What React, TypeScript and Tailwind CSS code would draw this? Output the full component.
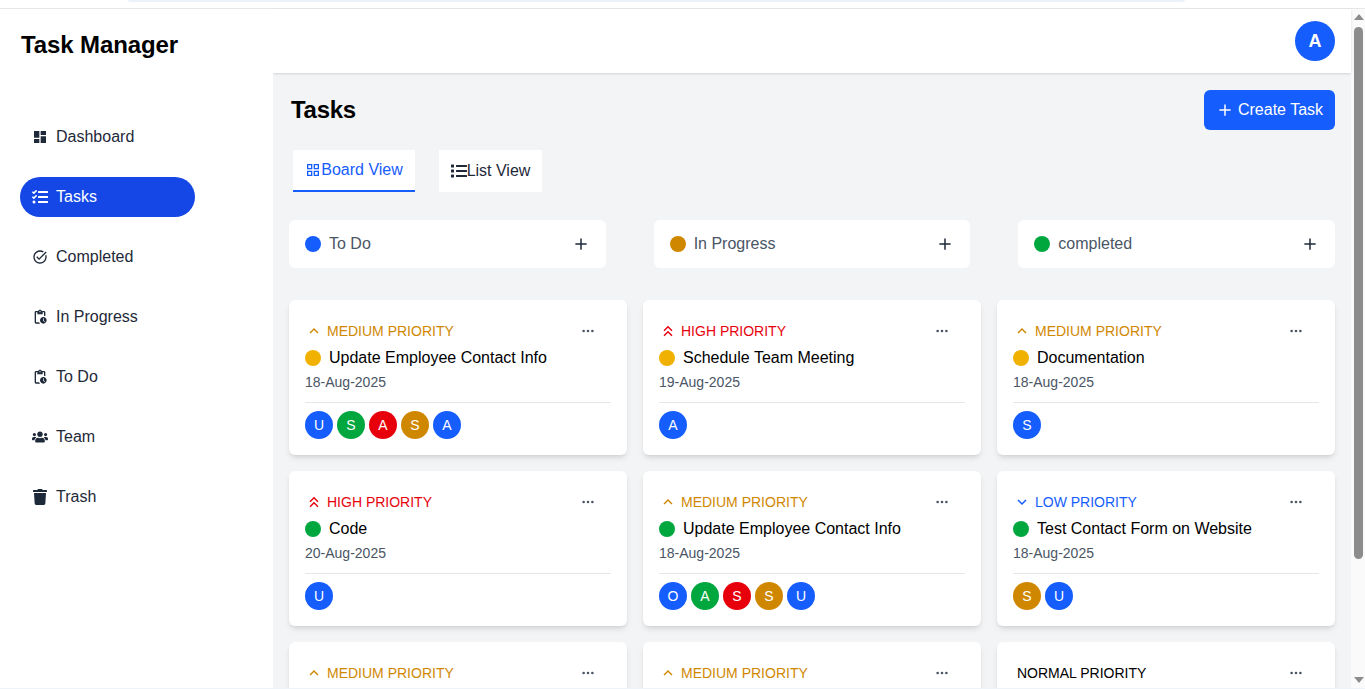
import type { ReactNode } from "react";
import { BsThreeDots } from "react-icons/bs";
import { FaList, FaTasks, FaTrash, FaUsers } from "react-icons/fa";
import { IoMdAdd } from "react-icons/io";
import {
  MdDashboard,
  MdGridView,
  MdKeyboardArrowDown,
  MdKeyboardArrowUp,
  MdKeyboardDoubleArrowUp,
  MdOutlinePendingActions,
  MdOutlineTaskAlt,
} from "react-icons/md";

type Priority = "high" | "medium" | "low" | "normal";

type Task = {
  title?: string;
  date?: string;
  priority: Priority;
  dot?: string;
  team?: { letter: string; color: string }[];
};

const BLUE = "bg-blue-600";
const GREEN = "bg-green-600";
const RED = "bg-red-600";
const GOLD = "bg-yellow-600";

const NAV: { label: string; icon: ReactNode; active?: boolean }[] = [
  { label: "Dashboard", icon: <MdDashboard size={16} /> },
  { label: "Tasks", icon: <FaTasks size={16} />, active: true },
  { label: "Completed", icon: <MdOutlineTaskAlt size={16} /> },
  { label: "In Progress", icon: <MdOutlinePendingActions size={16} /> },
  { label: "To Do", icon: <MdOutlinePendingActions size={16} /> },
  { label: "Team", icon: <FaUsers size={16} /> },
  { label: "Trash", icon: <FaTrash size={16} /> },
];

const COLUMNS = [
  { label: "To Do", color: BLUE },
  { label: "In Progress", color: GOLD },
  { label: "completed", color: GREEN },
];

const PRIORITY: Record<Priority, { label: string; text: string; icon: ReactNode }> = {
  high: { label: "HIGH PRIORITY", text: "text-red-600", icon: <MdKeyboardDoubleArrowUp size={18} /> },
  medium: { label: "MEDIUM PRIORITY", text: "text-yellow-600", icon: <MdKeyboardArrowUp size={18} /> },
  low: { label: "LOW PRIORITY", text: "text-blue-600", icon: <MdKeyboardArrowDown size={18} /> },
  normal: { label: "NORMAL PRIORITY", text: "text-black", icon: <span className="w-0" /> },
};

const TASKS: Task[] = [
  {
    title: "Update Employee Contact Info",
    date: "18-Aug-2025",
    priority: "medium",
    dot: "bg-yellow-500",
    team: [
      { letter: "U", color: BLUE },
      { letter: "S", color: GREEN },
      { letter: "A", color: RED },
      { letter: "S", color: GOLD },
      { letter: "A", color: BLUE },
    ],
  },
  {
    title: "Schedule Team Meeting",
    date: "19-Aug-2025",
    priority: "high",
    dot: "bg-yellow-500",
    team: [{ letter: "A", color: BLUE }],
  },
  {
    title: "Documentation",
    date: "18-Aug-2025",
    priority: "medium",
    dot: "bg-yellow-500",
    team: [{ letter: "S", color: BLUE }],
  },
  {
    title: "Code",
    date: "20-Aug-2025",
    priority: "high",
    dot: "bg-green-600",
    team: [{ letter: "U", color: BLUE }],
  },
  {
    title: "Update Employee Contact Info",
    date: "18-Aug-2025",
    priority: "medium",
    dot: "bg-green-600",
    team: [
      { letter: "O", color: BLUE },
      { letter: "A", color: GREEN },
      { letter: "S", color: RED },
      { letter: "S", color: GOLD },
      { letter: "U", color: BLUE },
    ],
  },
  {
    title: "Test Contact Form on Website",
    date: "18-Aug-2025",
    priority: "low",
    dot: "bg-green-600",
    team: [
      { letter: "S", color: GOLD },
      { letter: "U", color: BLUE },
    ],
  },
  // bottom row runs off the window, only the priority line shows
  { priority: "medium" },
  { priority: "medium" },
  { priority: "normal" },
];

function TaskCard({ task }: { task: Task }) {
  const p = PRIORITY[task.priority];
  return (
    <div className="h-[155px] rounded-md bg-white p-4 shadow-md">
      <div className="flex h-[30px] items-center justify-between">
        <div className={`flex items-center gap-1 text-sm ${p.text}`}>
          {p.icon}
          <span>{p.label}</span>
        </div>
        <BsThreeDots size={14} className="mr-4 text-gray-600" />
      </div>
      {task.title && (
        <>
          <div className="mt-px flex h-[22px] items-center gap-2">
            <span className={`h-4 w-4 rounded-full ${task.dot}`} />
            <span className="text-base text-black">{task.title}</span>
          </div>
          <p className="mt-[3px] text-sm leading-5 text-gray-600">{task.date}</p>
          <div className="mt-[10px] flex gap-1 border-t border-gray-200 pt-2">
            {task.team?.map((m, i) => (
              <span
                key={i}
                className={`flex h-7 w-7 items-center justify-center rounded-full text-sm text-white ${m.color}`}
              >
                {m.letter}
              </span>
            ))}
          </div>
        </>
      )}
    </div>
  );
}

export default function App() {
  return (
    <div className="flex h-[689px] flex-col overflow-hidden bg-white font-['Liberation_Sans',Arial,sans-serif]">
      <div className="h-[9px] shrink-0 border-b border-gray-200 px-[128px]">
        <div className="h-[2px] w-[1057px] rounded-b-lg bg-[#edf2fa]" />
      </div>

      <div className="flex min-h-0 flex-1">
        <aside className="relative z-20 w-[273px] shrink-0 bg-white">
          <h1 className="mt-5 ml-[21px] text-2xl leading-8 font-bold tracking-[-0.1px] text-black">Task Manager</h1>
          <nav className="mt-[56px] ml-5 flex w-[175px] flex-col gap-5">
            {NAV.map((item) => (
              <div
                key={item.label}
                className={`flex h-10 items-center gap-2 rounded-full pl-3 text-base ${
                  item.active ? "bg-blue-700 text-white" : "text-gray-800"
                }`}
              >
                {item.icon}
                <span>{item.label}</span>
              </div>
            ))}
          </nav>
        </aside>

        <div className="flex min-w-0 flex-1 flex-col">
          <header className="z-10 flex h-16 shrink-0 items-center justify-end bg-white px-4 shadow-sm">
            <span className="flex h-10 w-10 items-center justify-center rounded-full bg-blue-600 text-lg font-bold text-white">
              A
            </span>
          </header>

          <main className="min-h-0 flex-1 overflow-hidden bg-gray-100 px-4 pt-[17px]">
            <div className="flex h-10 items-center justify-between">
              <h2 className="ml-0.5 text-2xl font-bold tracking-[-0.3px] text-black">Tasks</h2>
              <button className="flex h-10 w-[131px] items-center justify-center gap-1 rounded-md bg-blue-600 text-base text-white">
                <IoMdAdd size={18} />
                Create Task
              </button>
            </div>

            <div className="mt-5 ml-1 flex gap-6">
              <div className="flex h-[42px] w-[122px] items-center justify-center border-b-2 border-blue-600 bg-white text-base text-blue-600">
                <MdGridView size={16} />
                Board View
              </div>
              <div className="flex h-[42px] w-[103px] items-center justify-center bg-white text-base text-gray-800">
                <FaList size={16} />
                List View
              </div>
            </div>

            <div className="mt-7 grid grid-cols-3 gap-12">
              {COLUMNS.map((c) => (
                <div key={c.label} className="flex h-12 items-center justify-between rounded-md bg-white px-4">
                  <div className="flex items-center gap-2 text-base text-gray-600">
                    <span className={`h-4 w-4 rounded-full ${c.color}`} />
                    {c.label}
                  </div>
                  <IoMdAdd size={18} className="text-gray-800" />
                </div>
              ))}
            </div>

            <div className="mt-8 grid grid-cols-3 gap-4">
              {TASKS.map((t, i) => (
                <TaskCard key={i} task={t} />
              ))}
            </div>
          </main>
        </div>

        <div className="flex w-[14px] shrink-0 flex-col items-center bg-[#fafafa] pt-[5px] pl-px">
          <span className="h-0 w-0 border-x-[5px] border-b-[6px] border-x-transparent border-b-[#8c8c8c]" />
          <span className="mt-[7px] h-[532px] w-[9px] shrink-0 rounded-full bg-[#8c8c8c]" />
          <span className="mt-[118px] h-0 w-0 border-x-[5px] border-t-[6px] border-x-transparent border-t-[#8c8c8c]" />
        </div>
      </div>
      <div className="h-px shrink-0 bg-[#eef2f9]" />
    </div>
  );
}
